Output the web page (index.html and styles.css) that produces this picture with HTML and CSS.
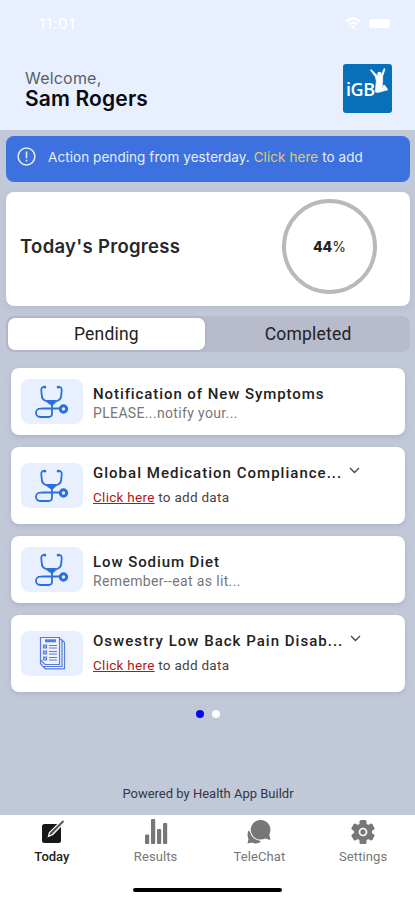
FILE: index.html
```html
<!DOCTYPE html>
<html lang="en">
<head>
    <meta charset="UTF-8">
    <meta name="viewport" content="width=device-width, initial-scale=1.0">
    <title>Today</title>
    <link rel="stylesheet" href="styles.css">
</head>
<body>
    <svg class="defs" width="0" height="0">
        <symbol id="stethoscope" viewBox="0 0 34 34">
            <g fill="none" stroke="#2b6fdc" stroke-width="1.8" stroke-linecap="round" stroke-linejoin="round">
                <path d="M10 3C7.500 2.500 6 3.800 6.300 6.500L6.800 11.500Q7 15.500 10 16.500L12 17.500M23 3C25.500 2.500 27 3.800 26.700 6.500L26.200 11.500Q26 15.500 23 16.500L21 17.500"/>
                <path d="M17 19V29.500Q17 33 13.500 33H5.200A4.200 4.200 0 0 1 5.200 24.600L9 24.500H24"/>
                <circle cx="28.500" cy="25" r="3.200" stroke-width="3"/>
            </g>
            <path d="M11.500 16H21.500L20.500 19L17 22L12.500 19Z" fill="#2b6fdc"/>
            <circle cx="9.800" cy="3.200" r="1.400" fill="#2b6fdc"/>
            <circle cx="23.200" cy="3.200" r="1.400" fill="#2b6fdc"/>
        </symbol>
    </svg>
    <header class="header">
        <div class="statusbar">
            <span class="clock">11:01</span>
            <svg class="wifi" width="16" height="13" viewBox="0 0 16 13">
                <g fill="none" stroke="#fff" stroke-width="2.4">
                    <path d="M1 4.500Q8 -1.500 15 4.500"/>
                    <path d="M3.800 7.600Q8 4 12.200 7.600"/>
                </g>
                <path d="M5.800 9.700Q8 8 10.200 9.700L8 12.300Z" fill="#fff"/>
            </svg>
            <span class="battery"></span>
        </div>
        <div class="greeting">
            <div>
                <div class="welcome">Welcome,</div>
                <div class="username">Sam Rogers</div>
            </div>
            <div class="logo">
                <span>iGB</span>
                <svg class="jumper" width="21" height="28" viewBox="0 0 19 27">
                    <circle cx="9.300" cy="6.500" r="2" fill="#fff"/>
                    <path d="M.8 3L5.500 9.500L6.500 13.500L6 18L5.500 24L8 24.500L17.500 22L14.500 17.500L12.800 18L13.300 20L12 20L12.500 14V9L14.800 2L13.900 1.500L11 8.200L7.500 8.500L1.500 2.500Z" fill="#fff" stroke="#fff" stroke-width=".7" stroke-linejoin="round"/>
                </svg>
            </div>
        </div>
    </header>

    <main class="main">
        <div class="banner">
            <svg width="19" height="19" viewBox="0 0 19 19" fill="none" stroke="#e8efff" stroke-width="1.500">
                <circle cx="9.500" cy="9.500" r="8.400"/>
                <path d="M9.500 4.500V11.200M9.500 12.800V14.500"/>
            </svg>
            <p>Action pending from yesterday. <a>Click here</a> to add</p>
        </div>

        <section class="progress">
            <h2>Today's Progress</h2>
            <div class="ring"><b>44</b>%</div>
        </section>

        <div class="tabs">
            <div class="tab active">Pending</div>
            <div class="tab">Completed</div>
        </div>

        <div class="tasks">
            <article class="task">
                <div class="thumb"><svg width="34" height="34"><use href="#stethoscope"/></svg></div>
                <div class="info">
                    <h3>Notification of New Symptoms</h3>
                    <p class="note">PLEASE...notify your...</p>
                </div>
            </article>
            <article class="task tall">
                <div class="thumb"><svg width="34" height="34"><use href="#stethoscope"/></svg></div>
                <div class="info">
                    <h3>Global Medication Compliance... <svg class="chevron" width="11" height="7" viewBox="0 0 11 7"><path d="M1 1L5.500 5.500L10 1"/></svg></h3>
                    <p class="action"><a>Click here</a> to add data</p>
                </div>
            </article>
            <article class="task">
                <div class="thumb"><svg width="34" height="34"><use href="#stethoscope"/></svg></div>
                <div class="info">
                    <h3>Low Sodium Diet</h3>
                    <p class="note">Remember--eat as lit...</p>
                </div>
            </article>
            <article class="task tall">
                <div class="thumb">
                    <svg width="27" height="34" viewBox="0 0 27 34" fill="none" stroke="#587cdd" stroke-width="1.200">
                        <path d="M1.500 1.500H20.500V28.500H6L1.500 24Z" fill="#eef3ff"/>
                        <path d="M20.500 2.500L23 4V30.500H4L1.500 27.500V24M23 4L25.500 6.500V32.800H6.500L4 30.500"/>
                        <path d="M6 4.800H17" stroke-width="3"/>
                        <path d="M4.500 9H7.500V12H4.500ZM4.500 15H7.500V18H4.500ZM4.500 21H7.500V24H4.500Z" fill="#a8bdf2"/>
                        <path d="M10 9.500H18M10 12H18M10 15.500H18M10 18H18M10 21.500H18M10 24H18"/>
                    </svg>
                </div>
                <div class="info">
                    <h3>Oswestry Low Back Pain Disab... <svg class="chevron" width="11" height="7" viewBox="0 0 11 7"><path d="M1 1L5.500 5.500L10 1"/></svg></h3>
                    <p class="action"><a>Click here</a> to add data</p>
                </div>
            </article>
        </div>

        <div class="dots"><i class="current"></i><i></i></div>
        <p class="powered">Powered by Health App Buildr</p>
    </main>

    <nav class="navbar">
        <div class="nav-item selected">
            <svg width="26" height="26" viewBox="0 0 26 26">
                <rect x="3" y="5" width="19" height="19" rx="2.500" fill="#161719"/>
                <path d="M12 15L24 2.500" stroke="#fff" stroke-width="4.500"/>
                <path d="M9.500 17.300L10.500 13.500L21 3.500L23 5.500L13 15.800Z" fill="#333" stroke="#fff" stroke-width="1.300"/>
                <path d="M13 13.500L24 2.500" stroke="#555" stroke-width="1.800" stroke-linecap="round"/>
            </svg>
            <span>Today</span>
        </div>
        <div class="nav-item">
            <svg width="26" height="26" viewBox="0 0 26 26" fill="#777">
                <rect x="2" y="15.500" width="4.200" height="9.500" rx="1"/>
                <rect x="8" y="0" width="4.200" height="25" rx="1"/>
                <rect x="14" y="10" width="4.200" height="15" rx="1"/>
                <rect x="20" y="4" width="4.200" height="21" rx="1"/>
            </svg>
            <span>Results</span>
        </div>
        <div class="nav-item">
            <svg width="26" height="26" viewBox="0 0 26 26" fill="#777">
                <path d="M2.500 11.500C1 15 1.500 18 2.500 20L1.500 24.500L6 23.500Q10 25.500 15 23Z"/>
                <path d="M14.500 1A9.800 9.800 0 1 0 19 19.500L24.500 21L23.300 15.500A9.800 9.800 0 0 0 14.500 1Z" stroke="#fff" stroke-width="1.800" paint-order="stroke"/>
            </svg>
            <span>TeleChat</span>
        </div>
        <div class="nav-item">
            <svg width="26" height="26" viewBox="0 0 26 26" fill="#777">
                <rect x="9.500" y="1" width="7" height="24" rx="1.500"/>
                <rect x="9.500" y="1" width="7" height="24" rx="1.500" transform="rotate(60 13 13)"/>
                <rect x="9.500" y="1" width="7" height="24" rx="1.500" transform="rotate(120 13 13)"/>
                <circle cx="13" cy="13" r="9"/>
                <circle cx="13" cy="13" r="3.500" stroke="#fff" stroke-width="1.700"/>
            </svg>
            <span>Settings</span>
        </div>
        <div class="home"></div>
    </nav>
</body>
</html>
```

FILE: styles.css
```css
* {
    box-sizing: border-box;
}
body {
    margin: 0;
    width: 415px;
    height: 900px;
    overflow: hidden;
    display: flex;
    flex-direction: column;
    background-color: #c1c8d8;
    font-family: Roboto, "Liberation Sans", sans-serif;
    color: #222;
    white-space: nowrap;
}
h2, h3, p {
    margin: 0;
}
.defs {
    position: absolute;
}
.header {
    height: 130px;
    background-color: #e8efff;
    font-family: Inter, sans-serif;
}
.statusbar {
    height: 46px;
    display: flex;
    align-items: center;
    padding-left: 39px;
    color: #fff;
}
.clock {
    font-size: 15px;
    font-weight: 500;
    letter-spacing: .7px;
    width: 306px;
}
.battery {
    width: 21px;
    height: 9px;
    margin-left: 8px;
    border-radius: 3px;
    background-color: #fff;
}
.greeting {
    display: flex;
    justify-content: space-between;
    padding: 18px 23px 0 25px;
}
.welcome {
    margin-top: 4px;
    font-size: 16px;
    line-height: 20px;
    letter-spacing: .2px;
    color: #5b5f69;
}
.username {
    font-size: 21px;
    line-height: 21px;
    font-weight: 600;
    letter-spacing: .15px;
    color: #090b12;
}
.logo {
    position: relative;
    width: 49px;
    height: 49px;
    border-radius: 3px;
    background-color: #0870bb;
    color: #fff;
    font: 600 18px/51px "Open Sans", sans-serif;
    letter-spacing: -.4px;
    padding-left: 3px;
}
.jumper {
    position: absolute;
    left: 26px;
    top: 3px;
}

.main {
    height: 685px;
    padding: 6px 5px 0 6px;
}
.banner {
    display: flex;
    height: 46px;
    padding: 11px 11px;
    border-radius: 8px;
    background-color: #3d71df;
    color: #e8efff;
}
.banner p {
    margin-left: 12px;
    font: 13.5px/20px Inter, sans-serif;
    letter-spacing: .07px;
}
.banner a {
    color: #dfca76;
}
.progress {
    display: flex;
    align-items: center;
    justify-content: space-between;
    height: 114px;
    margin-top: 10px;
    padding: 0 33px 6px 14px;
    border-radius: 8px;
    background-color: #fff;
    box-shadow: 0 2px 5px #a9acc280;
}
.progress h2 {
    font: 600 18.5px/24px Inter, sans-serif;
    letter-spacing: .3px;
    color: #27282b;
}
.ring {
    width: 95px;
    height: 95px;
    border: 4px solid #b9b9b9;
    border-radius: 50%;
    text-align: center;
    font: 14px/87px Inter, sans-serif;
}
.ring b {
    font-weight: 800;
}
.tabs {
    display: flex;
    height: 36px;
    margin-top: 10px;
    margin-bottom: 1px;
    padding: 2px 3px 2px 1.5px;
    border-radius: 8px;
    background-color: #b7bbcb;
}
.tab {
    flex: 1;
    text-align: center;
    font: 400 17.5px/33px Roboto, sans-serif;
    letter-spacing: .2px;
}
.tab.active {
    border-radius: 7px;
    background-color: #fff;
    box-shadow: 0 0 3px #9297aa80;
}
.tab:last-child {
    padding-left: 4px;
}

.tasks {
    display: grid;
    gap: 12px;
    padding: 15px 5px 0;
}
.task {
    display: flex;
    align-items: center;
    height: 66.5px;
    padding-left: 10px;
    border-radius: 8px;
    background-color: #fff;
    box-shadow: 0 2px 5px #a0a3b990;
}
.task.tall {
    height: 77.5px;
}
.thumb {
    display: flex;
    align-items: center;
    justify-content: center;
    width: 62px;
    height: 45px;
    border-radius: 8px;
    background-color: #e8efff;
}
.info {
    margin-left: 10px;
    padding-top: 5px;
}
.info h3 {
    font-size: 15px;
    line-height: 20px;
    font-weight: 500;
    letter-spacing: .92px;
}
.note {
    font-size: 14px;
    line-height: 19px;
    letter-spacing: .35px;
    color: #777;
}
.tall .info {
    padding-top: 0;
}
.tall .info h3 {
    line-height: 24px;
    letter-spacing: 1.02px;
}
.action {
    font-size: 13.5px;
    line-height: 24px;
    letter-spacing: .28px;
    color: #444;
}
.action a {
    color: #b3161b;
    text-decoration: underline;
}
.chevron {
    margin-left: 2px;
    vertical-align: 4px;
    fill: none;
    stroke: #444;
    stroke-width: 1.3;
}
.dots {
    display: flex;
    justify-content: center;
    gap: 8px;
    margin-top: 18px;
}
.dots i {
    width: 8px;
    height: 8px;
    border-radius: 50%;
    background-color: #fff;
}
.dots .current {
    background-color: #0708ec;
}
.powered {
    margin-top: 66px;
    text-align: center;
    font-size: 13px;
    line-height: 20px;
    color: #333744;
}

.navbar {
    display: grid;
    grid-template-columns: repeat(4, 103.75px);
    height: 85px;
    background-color: #fff;
    color: #777;
    align-content: start;
    padding-top: 4px;
}
.nav-item {
    display: flex;
    flex-direction: column;
    align-items: center;
    font-size: 13px;
    line-height: 24px;
}
.nav-item span {
    letter-spacing: .1px;
}
.nav-item.selected {
    color: #222;
    font-weight: 500;
}
.nav-item.selected span {
    letter-spacing: 0;
}
.home {
    grid-column: 1 / -1;
    justify-self: center;
    width: 149px;
    height: 4px;
    margin-top: 19px;
    border-radius: 3px;
    background-color: #000;
}
```
